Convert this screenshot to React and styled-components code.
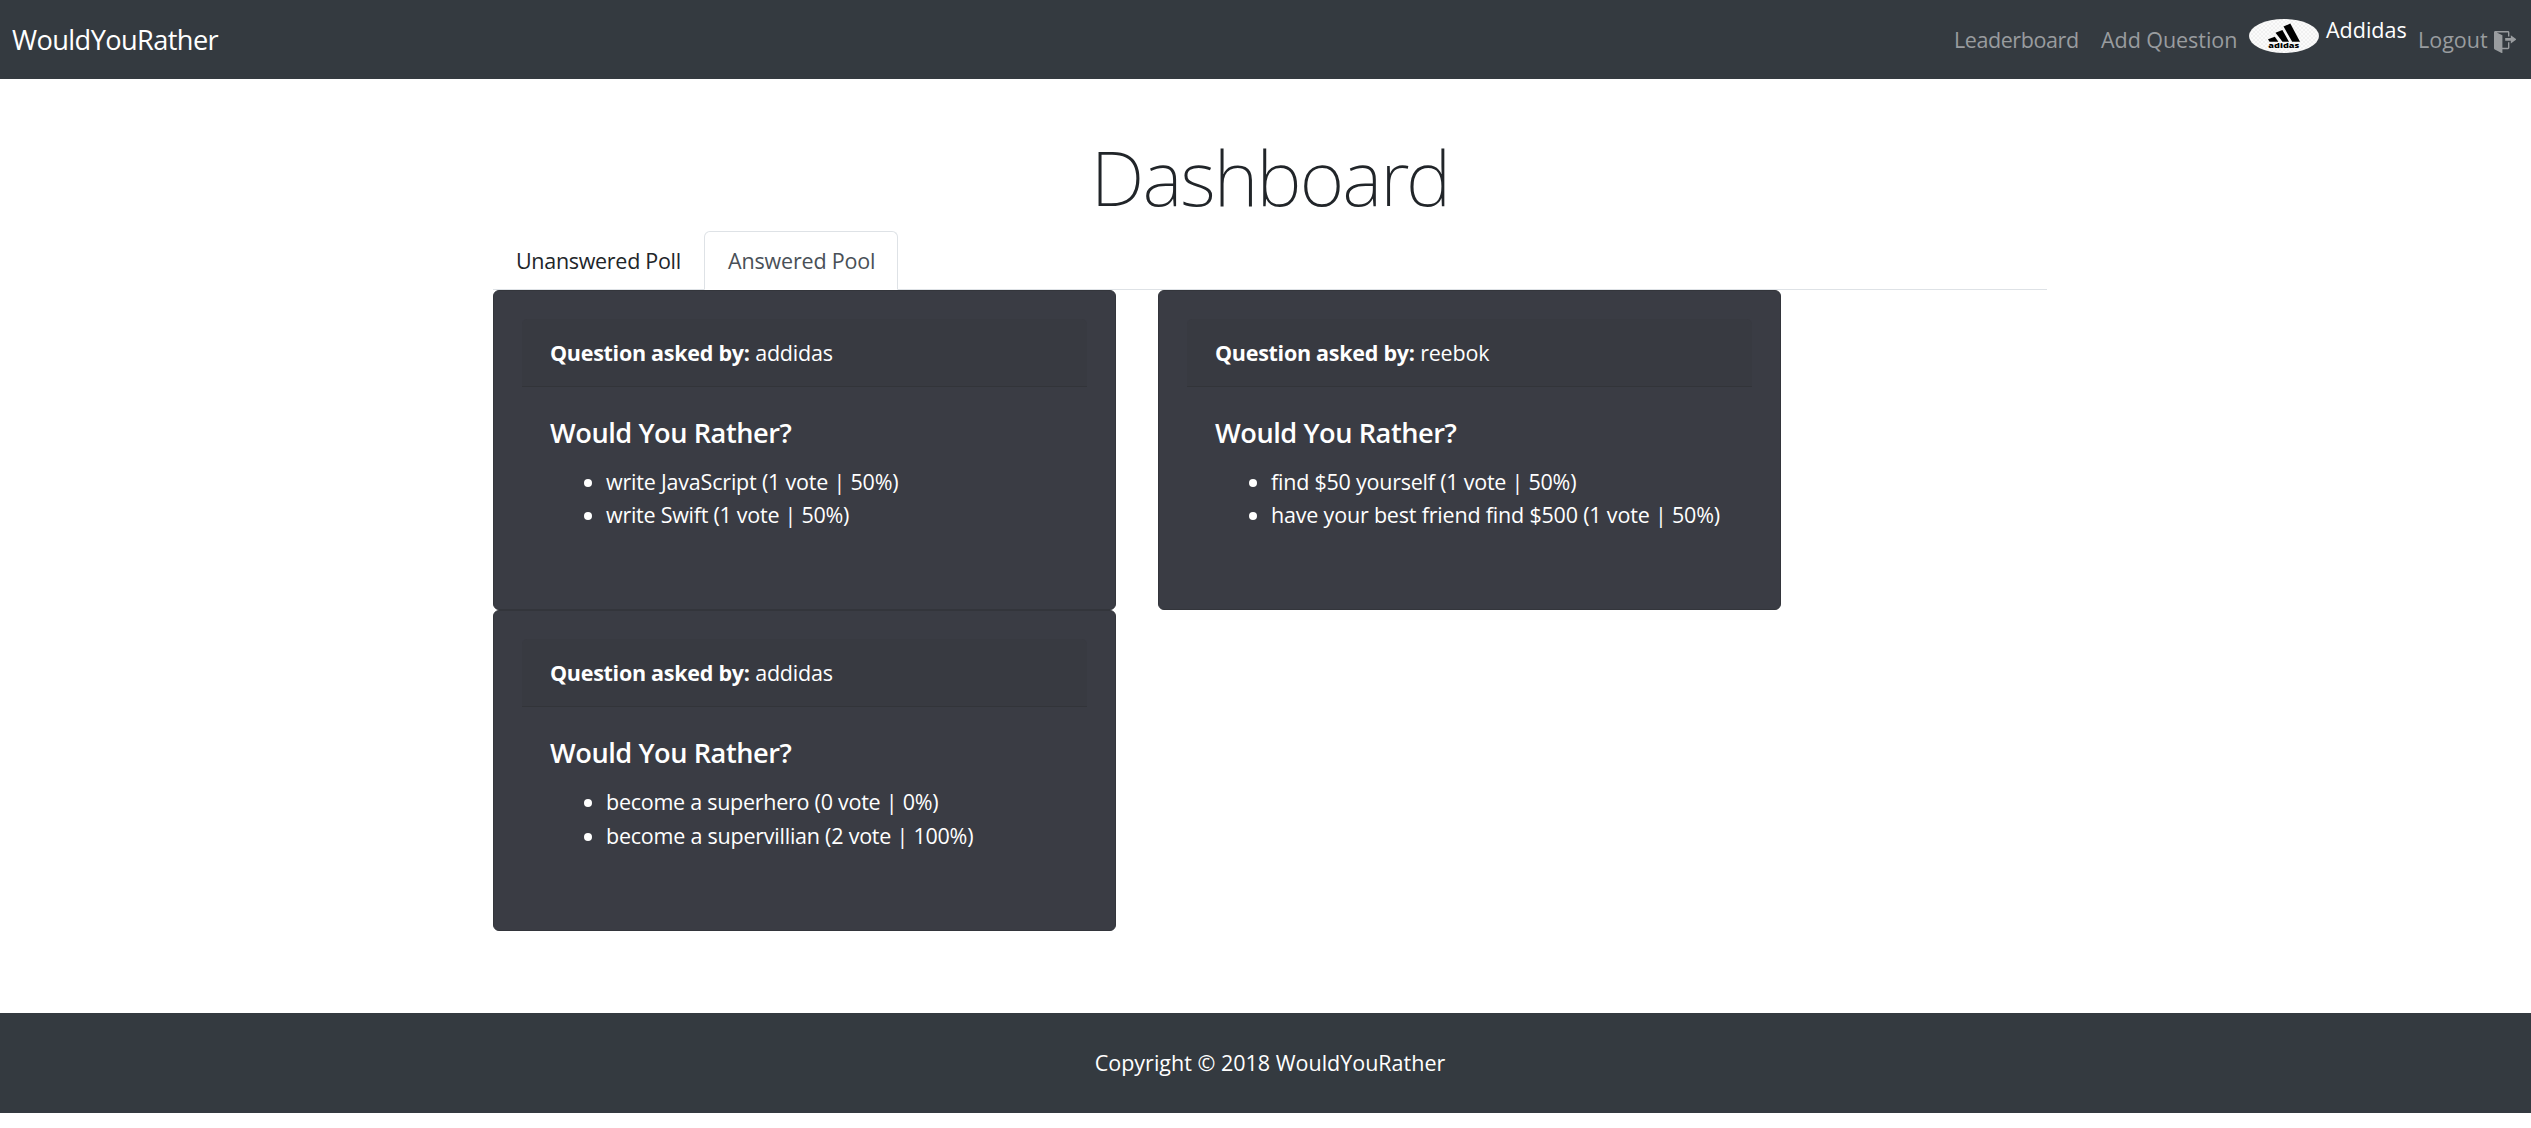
import React from 'react';
import styled, { createGlobalStyle } from 'styled-components';

const GlobalStyle = createGlobalStyle`
  *, *::before, *::after { box-sizing: border-box; }
  html, body { margin: 0; background: #fff; overflow: hidden; }
  body {
    font-family: "Open Sans", "Noto Sans", sans-serif;
    font-size: 21.5px;
    line-height: 33.4px;
    color: #212529;
  }
`;

const Page = styled.div`
  width: 2540px;
  display: flex;
  flex-direction: column;
`;

const Text = styled.span`
  letter-spacing: ${(p) => p.$track || 0}px;
  white-space: nowrap;
`;

const Navbar = styled.nav`
  height: 79px;
  padding: 0 22px 0 12px;
  display: flex;
  justify-content: space-between;
  align-items: center;
  background: #343a40;
`;

const Brand = styled.a`
  font-size: 27.2px;
  color: #fff;
`;

const NavLinks = styled.div`
  display: flex;
  align-items: center;
  color: #999c9f;
`;

const NavLink = styled.a`
  display: flex;
  align-items: center;
  width: ${(p) => p.$width}px;
`;

const User = styled.div`
  display: flex;
  align-items: flex-start;
  width: 169px;
  height: 41px;
  color: #fff;
`;

const Avatar = styled.svg`
  width: 70px;
  height: 34px;
  margin-right: 7px;
`;

const UserName = styled(Text)`
  margin-top: -6px;
`;

const LogoutIcon = styled.svg`
  width: 22.4px;
  height: 22.4px;
  margin: 5px 0 0 6px;
  fill: currentColor;
`;

const Container = styled.main`
  width: 1554px;
  height: 934px;
  margin-left: 493px;
`;

const Title = styled.h1`
  margin: 50px 0 0;
  height: 102px;
  line-height: 94px;
  font-family: "Noto Sans", "Open Sans", sans-serif;
  font-size: 76.5px;
  font-weight: 200;
  letter-spacing: -1.9px;
  text-align: center;
`;

const Tabs = styled.div`
  display: flex;
  height: 59px;
  border-bottom: 1px solid #dee2e6;
`;

const Tab = styled.a`
  height: 59px;
  width: ${(p) => p.$width}px;
  padding: 12px 0 0 ${(p) => (p.$active ? 23 : 22)}px;
  border: 1px solid ${(p) => (p.$active ? '#dee2e6' : 'transparent')};
  border-bottom-color: ${(p) => (p.$active ? '#fff' : 'transparent')};
  border-radius: 6px 6px 0 0;
  color: ${(p) => (p.$active ? '#495057' : '#212529')};
`;

const Grid = styled.div`
  display: grid;
  grid-template-columns: 623px 623px;
  grid-auto-rows: 320.4px;
  column-gap: 42px;
`;

const Card = styled.article`
  padding: 28px;
  border: 1px solid #33353b;
  border-radius: 6px;
  background: #3a3c44;
  color: #fff;
`;

const CardHeader = styled.header`
  height: 68px;
  padding: 17px 28px;
  border-bottom: 1px solid #323439;
  border-radius: 5px 5px 0 0;
  background: #383a41;
`;

const CardBody = styled.div`
  padding: 29px 28px 28px;
`;

const Question = styled.h5`
  margin: 0 0 16px;
  font-size: 27.2px;
  line-height: 33px;
  font-weight: 600;
`;

const Options = styled.ul`
  margin: 0;
  padding-left: 56px;
`;

const Footer = styled.footer`
  height: 100px;
  display: flex;
  align-items: center;
  justify-content: center;
  background: #343a40;
  color: #fff;
`;

const polls = [
  {
    author: 'addidas',
    options: [
      ['write JavaScript (1 vote | 50%)', -0.2],
      ['write Swift (1 vote | 50%)', -0.26],
    ],
  },
  {
    author: 'reebok',
    options: [
      ['find $50 yourself (1 vote | 50%)', -0.23],
      ['have your best friend find $500 (1 vote | 50%)', -0.19],
    ],
  },
  {
    author: 'addidas',
    options: [
      ['become a superhero (0 vote | 0%)', -0.26],
      ['become a supervillian (2 vote | 100%)', -0.23],
    ],
  },
];

function BrandAvatar() {
  return (
    <Avatar viewBox="0 0 70 34">
      <defs>
        <pattern id="weave" width="4" height="4" patternUnits="userSpaceOnUse">
          <rect width="4" height="4" fill="#fbfbfb" />
          <path d="M0 0h2v2H0zM2 2h2v2H2z" fill="#f1f1f1" />
        </pattern>
      </defs>
      <ellipse cx="35" cy="17" rx="35" ry="17" fill="url(#weave)" />
      <path d="M34.5 7.6 41.3 4.6 51 22.8H43.2z" />
      <path d="M26.5 13.8 33.4 11.1 40 22.8H33.4L32 20.8z" />
      <path d="M19 20.3 25.8 17.8 29.4 22.8H20.5z" />
      <text
        x="19.3"
        y="29"
        textLength="31"
        lengthAdjust="spacingAndGlyphs"
        fontFamily="Open Sans, sans-serif"
        fontSize="7.4"
        fontWeight="800"
      >
        adidas
      </text>
    </Avatar>
  );
}

function PollCard({ poll }) {
  return (
    <Card>
      <CardHeader>
        <Text as="strong" $track={-0.27}>Question asked by:</Text>{' '}
        <Text $track={-0.2}>{poll.author}</Text>
      </CardHeader>
      <CardBody>
        <Question>
          <Text $track={-0.45}>Would You Rather?</Text>
        </Question>
        <Options>
          {poll.options.map(([label, track]) => (
            <li key={label}>
              <Text $track={track}>{label}</Text>
            </li>
          ))}
        </Options>
      </CardBody>
    </Card>
  );
}

export default function App() {
  return (
    <Page>
      <GlobalStyle />
      <Navbar>
        <Brand>
          <Text $track={-0.6}>WouldYouRather</Text>
        </Brand>
        <NavLinks>
          <NavLink $width={147}>
            <Text $track={-0.42}>Leaderboard</Text>
          </NavLink>
          <NavLink $width={148}>
            <Text $track={-0.05}>Add Question</Text>
          </NavLink>
          <User>
            <BrandAvatar />
            <UserName>Addidas</UserName>
          </User>
          <NavLink $width={100}>
            <Text>Logout</Text>
            <LogoutIcon viewBox="0 0 16 16">
              <path d="M12 9V7H8V5h4V3l4 3-4 3zm-2 3H6V3L2 1h8v3h1V1c0-.55-.45-1-1-1H1C.45 0 0 .45 0 1v11.38c0 .39.22.73.55.91L6 16.01V13h4c.55 0 1-.45 1-1V8h-1v4z" />
            </LogoutIcon>
          </NavLink>
        </NavLinks>
      </Navbar>
      <Container>
        <Title>Dashboard</Title>
        <Tabs>
          <Tab $width={211}>
            <Text $track={-0.3}>Unanswered Poll</Text>
          </Tab>
          <Tab $width={194} $active>
            <Text $track={-0.17}>Answered Pool</Text>
          </Tab>
        </Tabs>
        <Grid>
          {polls.map((poll, i) => (
            <PollCard key={i} poll={poll} />
          ))}
        </Grid>
      </Container>
      <Footer>
        <Text>Copyright © 2018 WouldYouRather</Text>
      </Footer>
    </Page>
  );
}
